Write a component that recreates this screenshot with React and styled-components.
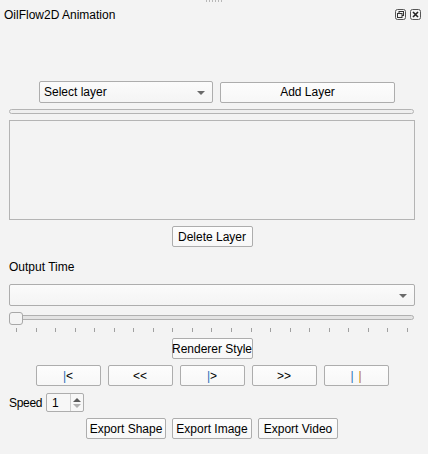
import React from "react";
import styled, { createGlobalStyle } from "styled-components";

const Global = createGlobalStyle`
  html, body { margin: 0; padding: 0; background: #f3f3f3; }
  * { box-sizing: border-box; }
`;

const FONT = `"Segoe UI", "Liberation Sans", Arial, sans-serif`;

const Page = styled.div`
  width: 428px;
  height: 454px;
  background: #f3f3f3;
  font-family: ${FONT};
  font-size: 12px;
  color: #000;
  display: flex;
  flex-direction: column;
  position: relative;
  overflow: hidden;
`;

const Grip = styled.div`
  position: absolute;
  top: 0;
  left: 205px;
  width: 18px;
  height: 2px;
  background-image: radial-gradient(circle, #b8b8b8 0.6px, transparent 0.8px);
  background-size: 3px 2px;
`;

const TitleBar = styled.div`
  height: 28px;
  display: flex;
  align-items: center;
  justify-content: space-between;
  padding: 1px 7px 0 4px;
`;

const Title = styled.span`
  font-size: 12px;
  line-height: 16px;
`;

const TitleIcons = styled.div`
  display: flex;
  gap: 4px;
`;

const Content = styled.div`
  display: flex;
  flex-direction: column;
  padding: 0 13px 0 9px;
`;

const Row = styled.div`
  display: flex;
  gap: ${(p) => p.$gap ?? 7}px;
  justify-content: ${(p) => p.$justify || "flex-start"};
  align-items: center;
  margin-top: ${(p) => p.$mt || 0}px;
  padding-left: ${(p) => p.$pl || 0}px;
  padding-right: ${(p) => p.$pr || 0}px;
`;

const Button = styled.div`
  width: ${(p) => p.$w}px;
  height: ${(p) => p.$h || 21}px;
  border: 1px solid #adadad;
  border-radius: 2px;
  background: linear-gradient(#fdfdfd, #f7f7f7);
  display: flex;
  align-items: center;
  justify-content: center;
  font-size: 12px;
  line-height: 14px;
  white-space: nowrap;
  color: #000;
`;

const Combo = styled.div`
  width: ${(p) => (p.$w ? `${p.$w}px` : "100%")};
  height: 22px;
  border: 1px solid #adadad;
  border-radius: 2px;
  background: linear-gradient(#fbfbfb, #f4f4f4);
  display: flex;
  align-items: center;
  justify-content: space-between;
  padding: 0 7px 0 4px;
  font-size: 12px;
`;

const Arrow = styled.span`
  width: 0;
  height: 0;
  border-left: 4px solid transparent;
  border-right: 4px solid transparent;
  border-top: 4px solid #6a6a6a;
  margin-top: 1px;
`;

const Progress = styled.div`
  height: 5px;
  margin-top: 6px;
  width: 405px;
  border: 1px solid #b4b4b4;
  border-radius: 3px;
  background: #efefef;
`;

const ListBox = styled.div`
  width: 406px;
  height: 100px;
  margin-top: 6px;
  border: 1px solid #b4b4b4;
  background: #f3f3f3;
`;

const Label = styled.div`
  font-size: 12px;
  line-height: 16px;
  margin-top: ${(p) => p.$mt || 0}px;
`;

const SliderWrap = styled.div`
  position: relative;
  height: 22px;
  margin-top: 6px;
  width: 406px;
`;

const Groove = styled.div`
  position: absolute;
  left: 0;
  right: 1px;
  top: 3px;
  height: 5px;
  border: 1px solid #b0b0b0;
  border-radius: 3px;
  background: #e3e3e3;
`;

const Handle = styled.div`
  position: absolute;
  left: 0;
  top: 0;
  width: 14px;
  height: 13px;
  border: 1px solid #a8a8a8;
  border-radius: 3px;
  background: #f4f4f4;
`;

const Ticks = styled.div`
  position: absolute;
  left: 7px;
  right: 7px;
  top: 16px;
  height: 4px;
  display: flex;
  justify-content: space-between;
`;

const Tick = styled.span`
  width: 1px;
  height: 4px;
  background: #a0a0a0;
`;

const Blue = styled.span`
  color: #2a6fb8;
`;
const Orange = styled.span`
  color: #b8731f;
  margin-left: ${(p) => p.$ml || 0}px;
`;

const SpeedLabel = styled.span`
  width: 37px;
  font-size: 12px;
  letter-spacing: -0.3px;
`;

const Spin = styled.div`
  width: 38px;
  height: 19px;
  border: 1px solid #adadad;
  border-radius: 2px;
  background: #f7f7f7;
  display: flex;
  align-items: stretch;
`;

const SpinText = styled.div`
  flex: 1;
  display: flex;
  align-items: center;
  padding-left: 5px;
  font-size: 12px;
`;

const SpinArrows = styled.div`
  width: 13px;
  border-left: 1px solid #cfcfcf;
  display: flex;
  flex-direction: column;
  align-items: center;
  justify-content: center;
  gap: 2px;
`;

const Tri = styled.span`
  width: 0;
  height: 0;
  border-left: 4px solid transparent;
  border-right: 4px solid transparent;
  ${(p) =>
    p.$up
      ? `border-bottom: 4px solid ${p.$c};`
      : `border-top: 4px solid ${p.$c};`}
`;

function FloatIcon() {
  return (
    <svg width="11" height="11" viewBox="0 0 11 11">
      <rect x="0.5" y="0.5" width="10" height="10" rx="2" fill="none" stroke="#555" />
      <rect x="4" y="2.5" width="4.5" height="4" fill="none" stroke="#333" />
      <rect x="2.5" y="4.5" width="4.5" height="4" fill="#f3f3f3" stroke="#333" />
    </svg>
  );
}

function CloseIcon() {
  return (
    <svg width="11" height="11" viewBox="0 0 11 11">
      <rect x="0.5" y="0.5" width="10" height="10" rx="2" fill="none" stroke="#555" />
      <path d="M3 3 L8 8 M8 3 L3 8" stroke="#222" strokeWidth="1.6" />
    </svg>
  );
}

export default function App() {
  const ticks = Array.from({ length: 21 });
  return (
    <Page>
      <Global />
      <Grip />
      <TitleBar>
        <Title>OilFlow2D Animation</Title>
        <TitleIcons>
          <FloatIcon />
          <CloseIcon />
        </TitleIcons>
      </TitleBar>
      <Content>
        <Row $mt={53} $pl={30} $gap={7}>
          <Combo $w={174}>
            <span>Select layer</span>
            <Arrow />
          </Combo>
          <Button $w={175}>Add Layer</Button>
        </Row>
        <Progress />
        <ListBox />
        <Row $mt={6} $justify="center">
          <Button $w={81}>Delete Layer</Button>
        </Row>
        <Label $mt={12}>Output Time</Label>
        <Row $mt={9}>
          <Combo>
            <span />
            <Arrow />
          </Combo>
        </Row>
        <SliderWrap>
          <Groove />
          <Handle />
          <Ticks>
            {ticks.map((_, i) => (
              <Tick key={i} />
            ))}
          </Ticks>
        </SliderWrap>
        <Row $mt={4} $justify="center">
          <Button $w={81}>Renderer Style</Button>
        </Row>
        <Row $mt={6} $justify="center" $gap={7}>
          <Button $w={65} $h={21}>
            <Blue>|</Blue>&lt;
          </Button>
          <Button $w={65} $h={21}>&lt;&lt;</Button>
          <Button $w={65} $h={21}>
            <Blue>|</Blue>&gt;
          </Button>
          <Button $w={65} $h={21}>&gt;&gt;</Button>
          <Button $w={65} $h={21}>
            <Blue>|</Blue>
            <Orange $ml={5}>|</Orange>
          </Button>
        </Row>
        <Row $mt={7} $gap={0}>
          <SpeedLabel>Speed</SpeedLabel>
          <Spin>
            <SpinText>1</SpinText>
            <SpinArrows>
              <Tri $up $c="#5a5a5a" />
              <Tri $c="#b0b0b0" />
            </SpinArrows>
          </Spin>
        </Row>
        <Row $mt={6} $justify="center" $gap={6}>
          <Button $w={80}>Export Shape</Button>
          <Button $w={80}>Export Image</Button>
          <Button $w={80}>Export Video</Button>
        </Row>
      </Content>
    </Page>
  );
}
